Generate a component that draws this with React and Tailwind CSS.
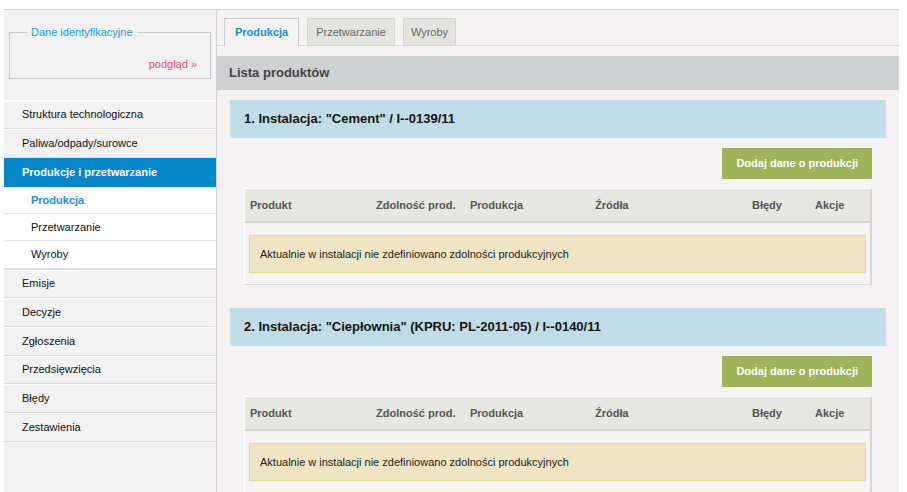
import React from "react";

const menu = [
  { label: "Struktura technologiczna" },
  { label: "Paliwa/odpady/surowce" },
  {
    label: "Produkcje i przetwarzanie",
    active: true,
    children: [
      { label: "Produkcja", active: true },
      { label: "Przetwarzanie" },
      { label: "Wyroby" },
    ],
  },
  { label: "Emisje" },
  { label: "Decyzje" },
  { label: "Zgłoszenia" },
  { label: "Przedsięwzięcia" },
  { label: "Błędy" },
  { label: "Zestawienia" },
];

const installations = [
  { id: 1, title: '1. Instalacja: "Cement" / I--0139/11' },
  { id: 2, title: '2. Instalacja: "Ciepłownia" (KPRU: PL-2011-05) / I--0140/11' },
];

const columns = ["Produkt", "Zdolność prod.", "Produkcja", "Źródła", "Błędy", "Akcje"];

const Sidebar = () => (
  <aside className="w-[213px] shrink-0 bg-[#f2f2f2] border-r border-[#d2d2d2]">
    <fieldset className="mt-[15px] mx-[5px] border border-[#c9c9c9] px-[10px] pb-[7px] pt-[18px] min-w-0">
      <legend className="ml-[7px] px-[4px] text-[11px] text-[#1d9ad8] leading-[14px]">
        Dane identyfikacyjne
      </legend>
      <div className="text-right text-[11px] text-[#e0506a] leading-[14px] pr-[3px]">
        podgląd »
      </div>
    </fieldset>
    <nav className="mt-[21px] border-t border-white">
      {menu.map((item, idx) => (
        <div key={item.label}>
          <div
            className={
              item.active
                ? "h-[29px] flex items-center pl-[18px] bg-[#0787cb] text-white font-bold text-[11px]"
                : (idx % 3 === 0 ? "h-[28px] " : "h-[29px] ") +
                  "flex items-center pl-[18px] text-[#111] text-[11px] border-b border-[#dcdcdc] shadow-[inset_0_1px_0_#ffffff]"
            }
          >
            {item.label}
          </div>
          {item.children && (
            <div className="bg-white border-b-2 border-[#dedede]">
              {item.children.map((sub, i) => (
                <div
                  key={sub.label}
                  className={
                    (i < item.children.length - 1 ? "border-b border-[#e4e4e4] " : "") +
                    (sub.active
                      ? "h-[27px] flex items-center pl-[27px] text-[11px] font-bold text-[#1b8fd2]"
                      : "h-[27px] flex items-center pl-[27px] text-[11px] text-[#111]")
                  }
                >
                  {sub.label}
                </div>
              ))}
            </div>
          )}
        </div>
      ))}
    </nav>
  </aside>
);

const Tabs = () => (
  <div className="flex items-end gap-[8px] pl-[7px] pt-[8px] border-b border-[#d8d8d8] h-[36px]">
    <div className="h-[28px] -mb-px px-[10px] flex items-center bg-[#f4f2f2] border border-b-0 border-[#cccccc] text-[11px] font-bold text-[#1b8fd2]">
      Produkcja
    </div>
    <div className="h-[27px] px-[8px] flex items-center bg-[#e3e3df] border border-b-0 border-[#d4d4d0] text-[11px] text-[#666]">
      Przetwarzanie
    </div>
    <div className="h-[27px] px-[7px] flex items-center bg-[#e3e3df] border border-b-0 border-[#d4d4d0] text-[11px] text-[#666]">
      Wyroby
    </div>
  </div>
);

const InstallationPanel = ({ title }) => (
  <div className="mx-[13px] mb-[23px]">
    <div className="h-[38px] flex items-center px-[14px] bg-[#c0dce6] text-[13px] font-bold text-[#151515]">
      {title}
    </div>
    <div className="px-[14px]">
      <div className="flex justify-end pt-[10px] pb-[9px]">
        <button className="h-[31px] px-[14px] bg-[#a0b35a] text-white text-[11px] font-bold">
          Dodaj dane o produkcji
        </button>
      </div>
      <div className="border-t border-white border-l border-[#e0e0e0] border-r-2 border-r-[#d6d6d6] border-b border-b-[#d6d6d6]">
        <div className="h-[34px] grid grid-cols-[126px_94px_125px_157px_63px_1fr] items-center pl-[5px] bg-[#e6e6e2] border-b-2 border-[#d0d0d0] text-[11px] font-bold text-[#555]">
          {columns.map((c) => (
            <div key={c}>{c}</div>
          ))}
        </div>
        <div className="pt-[12px] pb-[11px] pl-[4px] pr-[4px]">
          <div className="h-[38px] flex items-center px-[10px] bg-[#efe5c4] border border-[#e2da8c] text-[11px] text-[#222]">
            Aktualnie w instalacji nie zdefiniowano zdolności produkcyjnych
          </div>
        </div>
      </div>
    </div>
  </div>
);

const App = () => {
  return (
    <div className="bg-white h-[492px] overflow-hidden pt-[9px] pl-[4px] pr-[8px] font-['Liberation_Sans',Arial,sans-serif]">
      <div className="flex h-[483px] border-t border-[#cfcfcf]">
        <Sidebar />
        <main className="flex-1 bg-[#f4f2f2] overflow-hidden">
          <Tabs />
          <div className="mt-[10px] h-[34px] flex items-center pl-[12px] bg-[#d0d1d2] text-[13px] font-bold text-[#444]">
            Lista produktów
          </div>
          <div className="pt-[10px]">
            {installations.map((inst) => (
              <InstallationPanel key={inst.id} title={inst.title} />
            ))}
          </div>
        </main>
      </div>
    </div>
  );
};

export default App;
